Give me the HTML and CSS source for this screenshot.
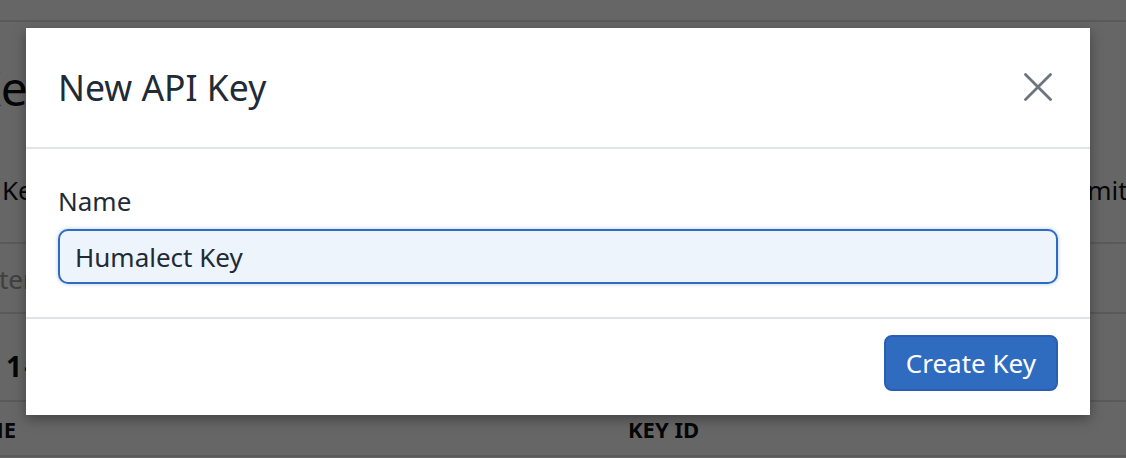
FILE: index.html
```html
<!DOCTYPE html>
<html lang="en">
<head>
<meta charset="utf-8">
<title>New API Key</title>
<link rel="stylesheet" href="styles.css">
</head>
<body>
  <div class="page">
    <div class="topbar"></div>
    <h1 class="page-title">Keys</h1>
    <div class="tabs">
      <span class="tab-left">Keys</span>
      <span class="tab-right">Limits</span>
    </div>
    <div class="filter">Filter keys</div>
    <div class="pager">1 - 1 of 1</div>
    <div class="thead">
      <span class="col-name">NAME</span>
      <span class="col-id">KEY ID</span>
    </div>
  </div>

  <div class="overlay"></div>

  <div class="modal" role="dialog" aria-labelledby="modal-title">
    <div class="modal-header">
      <h2 class="modal-title" id="modal-title">New API Key</h2>
      <button class="close-btn" aria-label="Close">
        <svg width="28" height="28" viewBox="0 0 28 28" aria-hidden="true">
          <path d="M1.5 1.5 L26.5 26.5 M26.5 1.5 L1.5 26.5" stroke="#6c757d" stroke-width="2.8" stroke-linecap="round" fill="none"/>
        </svg>
      </button>
    </div>
    <div class="modal-body">
      <label class="field-label" for="key-name">Name</label>
      <input class="field-input" id="key-name" type="text" value="Humalect Key">
    </div>
    <div class="modal-footer">
      <button class="btn-primary">Create Key</button>
    </div>
  </div>
</body>
</html>
```

FILE: styles.css
```css
html, body {
  margin: 0;
  padding: 0;
}

body {
  width: 1126px;
  height: 458px;
  overflow: hidden;
  background: #ffffff;
  font-family: "Noto Sans", "Open Sans", sans-serif;
  color: #111111;
  position: relative;
}

/* ---------- background page ---------- */
.page {
  width: 1126px;
}

.topbar {
  height: 20px;
  border-bottom: 2px solid #e2e2e2;
}

.page-title {
  margin: 38px 0 0 -29px;
  font-size: 48px;
  line-height: 56px;
  font-weight: 400;
  color: #111;
}

.tabs {
  display: flex;
  justify-content: space-between;
  padding: 55px 0 32px;
  font-size: 26px;
  line-height: 39px;
  border-bottom: 2px solid #e2e2e2;
  overflow: hidden;
}

.tab-left {
  margin-left: 2px;
}

.tab-right {
  margin-right: -14px;
}

.filter {
  padding: 16px 0 13px;
  margin-left: -28px;
  font-size: 26px;
  line-height: 39px;
  color: #a0a0a0;
  border-bottom: 2px solid #e2e2e2;
}

.pager {
  padding: 31px 0 13px 6px;
  font-size: 28px;
  line-height: 42px;
  font-weight: 700;
  word-spacing: -5px;
  border-bottom: 2px solid #e2e2e2;
}

.thead {
  display: flex;
  padding: 11px 0 9px;
  font-size: 22px;
  line-height: 33px;
  font-weight: 700;
  border-bottom: 2px solid #e2e2e2;
}

.col-name {
  margin-left: -50px;
  width: 678px;
}

/* ---------- overlay ---------- */
.overlay {
  position: absolute;
  inset: 0;
  background: rgba(0, 0, 0, 0.6);
}

/* ---------- modal ---------- */
.modal {
  position: absolute;
  left: 26px;
  top: 28px;
  width: 1064px;
  background: #ffffff;
  box-shadow: 0 4px 12px rgba(0, 0, 0, 0.35);
  color: #212b36;
}

.modal-header {
  display: flex;
  align-items: center;
  justify-content: space-between;
  padding: 32px 38px 33px 32px;
  border-bottom: 2px solid #e0e4e9;
}

.modal-title {
  margin: 0;
  font-size: 35.5px;
  line-height: 54px;
  font-weight: 400;
  color: #212b36;
}

.close-btn {
  display: flex;
  width: 28px;
  height: 28px;
  padding: 0;
  border: 0;
  background: transparent;
}

.modal-body {
  padding: 33px 32px 33px;
}

.field-label {
  display: block;
  margin-bottom: 8px;
  font-size: 26px;
  line-height: 39px;
  color: #212b36;
}

.field-input {
  display: block;
  box-sizing: border-box;
  width: 100%;
  height: 55px;
  margin: 0;
  padding: 0 15px;
  border: 2px solid #2f6bc0;
  border-radius: 10px;
  background: #edf4fb;
  box-shadow: 0 0 4px rgba(47, 107, 192, 0.35);
  font-family: inherit;
  font-size: 26px;
  line-height: 39px;
  color: #212b36;
  outline: none;
}

.modal-footer {
  display: flex;
  justify-content: flex-end;
  padding: 16px 32px 24px;
  border-top: 2px solid #e0e4e9;
}

.btn-primary {
  box-sizing: border-box;
  height: 56px;
  padding: 0 20px;
  border: 2px solid #2a5eb3;
  border-radius: 8px;
  background: #2f6bbf;
  font-family: inherit;
  font-size: 26px;
  line-height: 39px;
  color: #ffffff;
}
```
